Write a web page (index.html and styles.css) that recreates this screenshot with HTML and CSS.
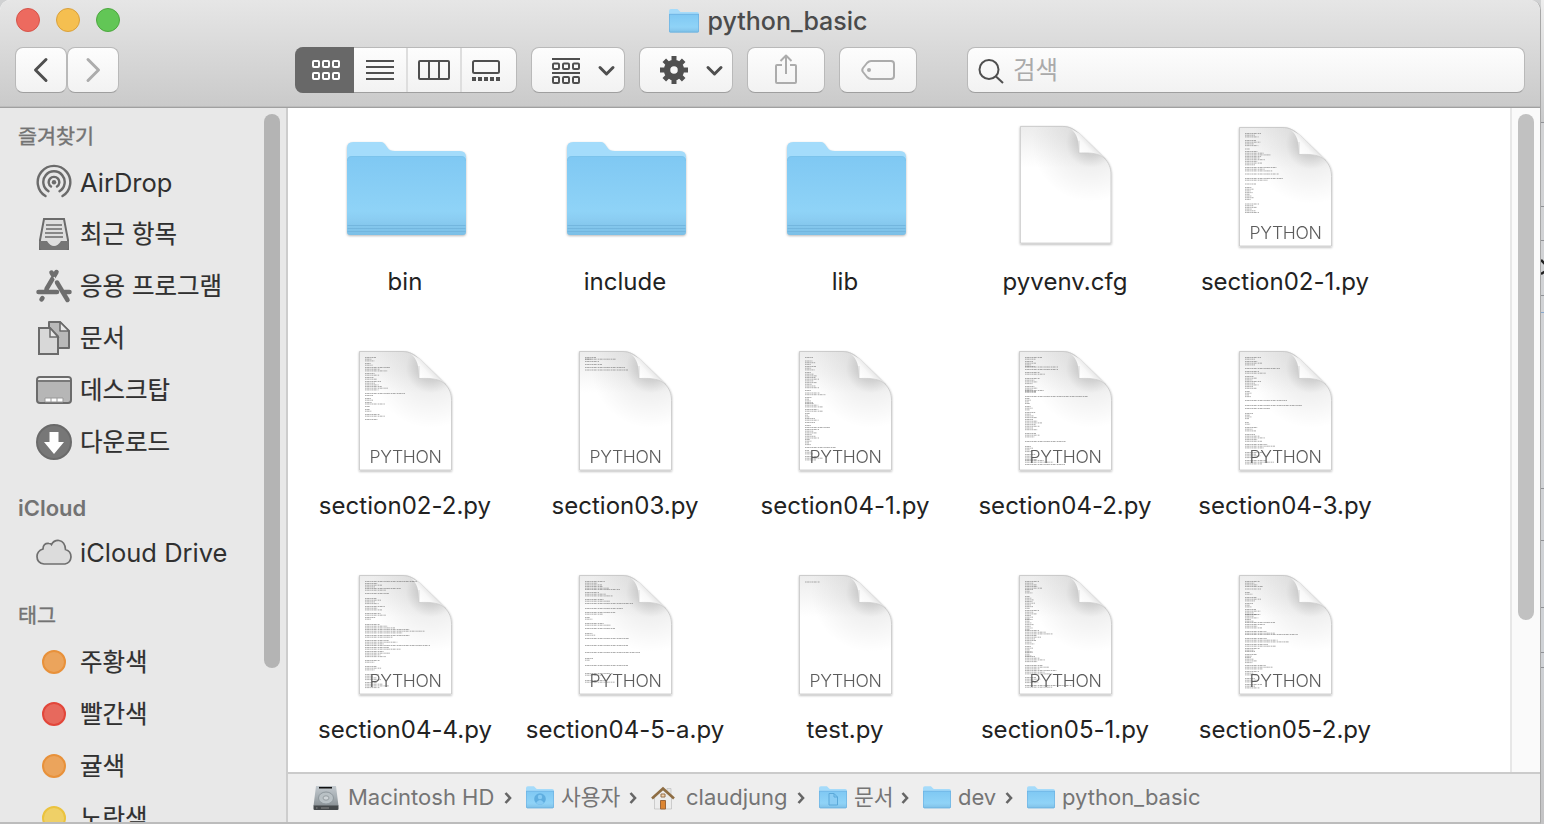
FILE: index.html
```html
<!DOCTYPE html>
<html lang="ko">
<head>
<meta charset="utf-8">
<title>python_basic</title>
<link rel="stylesheet" href="styles.css">
</head>
<body>
<svg class="defs" width="0" height="0" aria-hidden="true">
  <defs>
    <linearGradient id="folderFront" x1="0" y1="0" x2="0" y2="1">
      <stop offset="0" stop-color="#7fc8f3"/><stop offset=".7" stop-color="#8fd3f7"/><stop offset=".8" stop-color="#8bcdf2"/><stop offset="1" stop-color="#7bbfe6"/>
    </linearGradient>
    <linearGradient id="paperTop" x1="0" y1="0" x2="0" y2="1">
      <stop offset="0" stop-color="#ececec"/><stop offset=".35" stop-color="#fff"/>
    </linearGradient>
    <radialGradient id="foldShade" gradientUnits="userSpaceOnUse" cx="90" cy="22" r="60">
      <stop offset="0" stop-color="#000" stop-opacity=".2"/><stop offset=".22" stop-color="#000" stop-opacity=".16"/><stop offset=".42" stop-color="#000" stop-opacity=".06"/><stop offset="1" stop-color="#000" stop-opacity="0"/>
    </radialGradient>
    <linearGradient id="curl" gradientUnits="userSpaceOnUse" x1="79" y1="32" x2="90" y2="22">
      <stop offset="0" stop-color="#fff"/><stop offset=".6" stop-color="#f8f8f8"/><stop offset="1" stop-color="#e4e4e4"/>
    </linearGradient>
    <linearGradient id="disk" x1="0" y1="0" x2="0" y2="1">
      <stop offset="0" stop-color="#c3cacf"/><stop offset=".5" stop-color="#a9b1b6"/><stop offset="1" stop-color="#8a9195"/>
    </linearGradient>
    <symbol id="folder" viewBox="0 0 128 128">
      <path class="folder-back" d="M6 26q0-6 6-6h27c4 0 5 2 7 5s4 4 8 4h65q6 0 6 6v74H6z"/>
      <path fill="url(#folderFront)" d="M6 39q0-5 5-5h109q5 0 5 5v71q0 3-3 3H9q-3 0-3-3z"/>
      <path class="folder-edge" d="M6.500 103.500h118M6.500 106.500h118M6.500 109.500h118"/>
      <path class="folder-rim" d="M6.500 39q0-4.500 4.500-4.500h109q4.500 0 4.500 4.500"/>
    </symbol>
    <symbol id="folder-s" viewBox="0 0 30 26">
      <path fill="#a5dbfa" d="M0 3Q0 1 2 1h6.500l3 3H28q2 0 2 2v17H0z"/>
      <path fill="url(#folderFront)" d="M0 6h30v17q0 1.500-1.500 1.500h-27Q0 24.500 0 23z"/>
      <path fill="none" stroke="#6aaede" stroke-width=".7" d="M.4 6v17q0 1.100 1.100 1.100h27q1.100 0 1.100-1.100V6M.4 6.300h29.200"/>
    </symbol>
    <symbol id="page" viewBox="0 0 128 128">
      <path fill="url(#paperTop)" d="M18 5h43c8 0 12 3 18 8l25 24c5 5 7 10 7 17v70.500H18z"/>
      <path fill="url(#foldShade)" d="M18 5h43c8 0 12 3 18 8l25 24c5 5 7 10 7 17v70.500H18z"/>
      <path class="page-edge" d="M18.500 124V5.500H61c8 0 12 3 17.500 8l25 24c5 5 7 10 7 17V124z"/>
      <path fill="url(#curl)" d="M70 8c6 5 8 11 8 24.500 14-.5 20 .5 27 6L79 13z"/>
      <path fill="none" stroke="#c9c9c9" stroke-width=".7" d="M78 20v12.500c14-.5 20 .5 27 6"/>
    </symbol>
    <symbol id="chev" viewBox="0 0 8 12"><path class="chev-line" d="M1.500 1l4.500 5-4.500 5"/></symbol>
  </defs>
</svg>
<div class="screen">
<div class="window">
  <header class="head">
    <div class="titlebar">
      <div class="lights"><i class="light close"></i><i class="light min"></i><i class="light zoom"></i></div>
      <div class="title"><svg class="title-icon"><use href="#folder-s"/></svg><span>python_basic</span></div>
    </div>
    <div class="toolbar">
      <div class="nav">
        <button class="btn nav-btn"><svg width="50" height="44"><path class="s3 dark" d="M30 11.500L19.500 22 30 32.500"/></svg></button>
        <button class="btn nav-btn"><svg width="50" height="44"><path class="s3 pale" d="M20 11.500L30.500 22 20 32.500"/></svg></button>
      </div>
      <div class="btn views">
        <div class="view on"><svg width="58" height="46"><g class="sq white"><rect x="18" y="14" width="6" height="6" rx="1"/><rect x="28" y="14" width="6" height="6" rx="1"/><rect x="38" y="14" width="6" height="6" rx="1"/><rect x="18" y="26" width="6" height="6" rx="1"/><rect x="28" y="26" width="6" height="6" rx="1"/><rect x="38" y="26" width="6" height="6" rx="1"/></g></svg></div>
        <div class="view"><svg width="52" height="44"><path class="s2 dark" d="M12 13h28M12 19h28M12 25h28M12 31h28"/></svg></div>
        <div class="view"><svg width="52" height="44"><path class="s2 dark" d="M12 13h28q1 0 1 1v16q0 1-1 1H12q-1 0-1-1V14q0-1 1-1zM21 13v18M31 13v18"/></svg></div>
        <div class="view"><svg width="52" height="44"><rect class="s2 dark" x="11" y="13" width="26" height="12" rx="1.500"/><path class="dots" d="M10 31h28"/></svg></div>
      </div>
      <button class="btn wide"><svg width="92" height="44"><path class="s2 dark" d="M20 11h28M20 25h28"/><g class="sq gray"><rect x="21" y="15.500" width="6" height="5.500" rx="1"/><rect x="31" y="15.500" width="6" height="5.500" rx="1"/><rect x="41" y="15.500" width="6" height="5.500" rx="1"/><rect x="21" y="29" width="6" height="6" rx="1"/><rect x="31" y="29" width="6" height="6" rx="1"/><rect x="41" y="29" width="6" height="6" rx="1"/></g><path class="s3 dark" d="M68 19.500l6.500 6.500 6.500-6.500"/></svg></button>
      <button class="btn wide"><svg width="92" height="44"><circle class="gear-body" cx="34" cy="22" r="7"/><path class="teeth" d="M34 14V8M34 30v6M26 22h-6M42 22h6M28.500 16.500l-4.200-4.200M39.500 16.500l4.200-4.200M28.500 27.500l-4.200 4.200M39.500 27.500l4.200 4.200"/><path class="s3 dark" d="M68 19.500l6.500 6.500 6.500-6.500"/></svg></button>
      <button class="btn small"><svg width="76" height="44"><path class="s2 pale" d="M34 17h-5q-1 0-1 1v16q0 1 1 1h18q1 0 1-1V18q0-1-1-1h-5M38 26V8M32.500 13L38 7.500l5.500 5.500"/></svg></button>
      <button class="btn small"><svg width="76" height="44"><path class="s2 pale" d="M31 13h20q3 0 3 3v12q0 3-3 3H31q-2 0-4-2l-4-5q-1.500-2 0-4l4-5q2-2 4-2z"/><circle cx="29" cy="22" r="2" fill="#acacac"/></svg></button>
      <div class="btn search"><svg width="44" height="44"><circle class="s2 dark" cx="21" cy="21.500" r="9.500"/><path class="s2 dark" d="M28 28.500l7 6.500"/></svg><span>검색</span></div>
    </div>
  </header>
  <div class="body">
    <aside class="sidebar">
      <nav class="side-list">
        <h2 class="side-h first">즐겨찾기</h2>
        <div class="item en"><svg width="36" height="36"><g class="s25 gray-l"><path d="M9.500 32.100a16.300 16.300 0 1 1 17 0M12.500 27.200a10.700 10.700 0 1 1 11 0M15 22.500a5.300 5.300 0 1 1 6 0"/></g><circle cx="18" cy="18.200" r="2.200" fill="#6b6b6b"/></svg><span>AirDrop</span></div>
        <div class="item"><svg width="36" height="36"><path fill="#dedede" stroke="#6b6b6b" stroke-width="2" d="M8 3h20l4 21v9H4v-9z"/><path fill="#757575" d="M3 25h8q3 5 7 5t7-5h8l-1 7q0 2-2 2H6q-2 0-2-2z"/><path class="s15 gray-l" d="M10 9h16M10 13h16M9 17h18M9 21h18"/></svg><span>최근 항목</span></div>
        <div class="item"><svg width="36" height="36"><path class="app-bar" d="M15.500 4.500l1.200 2M20.500 4L10.500 21M2.500 24H21M28.500 24h5M6.500 30l-1 1.500"/><path class="app-gap" d="M18 9l4 7"/><path class="app-bar" d="M21 14.500l10.500 17.500"/></svg><span>응용 프로그램</span></div>
        <div class="item"><svg width="36" height="36"><path class="s2 gray-l back-page" d="M13 29V2h11l9 9v17H23"/><path class="s15 gray-l tip" d="M24 2v9h9z"/><path fill="#d8d8d8" stroke="#6b6b6b" stroke-width="2" d="M3 8h11l8 8.500V34H3z"/><path fill="#e8e8e8" stroke="#6b6b6b" stroke-width="1.500" d="M14 8v9h8z"/></svg><span>문서</span></div>
        <div class="item"><svg width="36" height="36"><rect x="1" y="5" width="34" height="26" rx="3" fill="#b6b6b6" stroke="#6b6b6b" stroke-width="2"/><path fill="#f0f0f0" d="M2 8q0-2 2-2h28q2 0 2 2H2z"/><path class="s15 gray-l" d="M2 9h32"/><path fill="#fff" stroke="#999" d="M9 26h18v4H9zM15 26v4M21 26v4"/></svg><span>데스크탑</span></div>
        <div class="item"><svg width="36" height="36"><circle cx="18" cy="18" r="17" fill="#777" stroke="#6a6a6a" stroke-width="2"/><path fill="#fff" d="M13.500 8h9v10H28L18 30 8 18h5.500z"/></svg><span>다운로드</span></div>
        <h2 class="side-h en">iCloud</h2>
        <div class="item en"><svg width="36" height="36"><path fill="#dcdcdc" stroke="#6f6f6f" stroke-width="1.700" d="M8 30Q1 29 1 22.500 1 17 7 15q0-6 6-5.500 2 0 2.500 1Q18 6 23 6.500q6 1 6.500 9Q35 17 35 23q-.5 6-6 7z"/></svg><span>iCloud Drive</span></div>
        <h2 class="side-h">태그</h2>
        <div class="item"><i class="tag orange"></i><span>주황색</span></div>
        <div class="item"><i class="tag red"></i><span>빨간색</span></div>
        <div class="item"><i class="tag orange"></i><span>귤색</span></div>
        <div class="item"><i class="tag yellow"></i><span>노란색</span></div>
      </nav>
      <div class="side-thumb"></div>
    </aside>
    <section class="main">
      <div class="content">
        <div class="grid" id="grid"></div>
        <div class="track"><div class="thumb"></div></div>
      </div>
      <footer class="path">
        <div class="crumb c1"><svg width="26" height="26"><path d="M3 1h20l2.500 20H.5z" fill="url(#disk)"/><path d="M.5 20.500h25V24q0 1-1 1h-23q-1 0-1-1z" fill="#45494b"/><path d="M6 2.700h13" stroke="#111" stroke-width="1.600"/><ellipse cx="13" cy="13" rx="7.500" ry="6" fill="#b9c1c5" stroke="#8f989d"/><ellipse cx="13" cy="13" rx="3" ry="2.200" fill="#cfd5d8" stroke="#959da1"/><path d="M3 23h1.500M8 23h8" stroke="#888"/></svg><span>Macintosh HD</span></div>
        <svg class="sep"><use href="#chev"/></svg>
        <div class="crumb c2"><svg width="28" height="25" viewBox="0 0 28 25"><use href="#folder-s" width="28" height="25"/><circle cx="14" cy="14" r="5.800" fill="#5faee0"/><circle cx="14" cy="12" r="2.200" fill="#86cbf4"/><path d="M10 18q4-6 8 0-4 3.500-8 0z" fill="#86cbf4"/></svg><span class="ko">사용자</span></div>
        <svg class="sep"><use href="#chev"/></svg>
        <div class="crumb c3"><svg width="24" height="24"><path d="M16 2.500h4v7h-4z" fill="#e5e5e5" stroke="#bbb" stroke-width=".6"/><path d="M3.500 11L12 4l8.500 7v12h-17z" fill="#ececec" stroke="#b5b5b5" stroke-width=".6"/><path d="M1 12.500L12 2.500l11 10" fill="none" stroke="#8e6d43" stroke-width="2.600"/><path d="M9.500 14.500h5v8.500h-5z" fill="#dd8531" stroke="#9c663a"/><path d="M10 8h4v3h-4z" fill="#f4d3ad" stroke="#94714c"/></svg><span>claudjung</span></div>
        <svg class="sep"><use href="#chev"/></svg>
        <div class="crumb c4"><svg width="28" height="25" viewBox="0 0 28 25"><use href="#folder-s" width="28" height="25"/><path d="M10 8.500h5l3.500 3.500v8H10zM15 8.500V12h3.500" fill="#8bcdf4" stroke="#5aa8d9"/></svg><span class="ko">문서</span></div>
        <svg class="sep"><use href="#chev"/></svg>
        <div class="crumb c5"><svg width="28" height="25" viewBox="0 0 28 25"><use href="#folder-s" width="28" height="25"/></svg><span>dev</span></div>
        <svg class="sep"><use href="#chev"/></svg>
        <div class="crumb c6"><svg width="28" height="25" viewBox="0 0 28 25"><use href="#folder-s" width="28" height="25"/></svg><span>python_basic</span></div>
      </footer>
    </section>
  </div>
</div>
<svg class="behind" width="3" height="824"><path d="M0 122.500h4M0 206.500h4M0 240.500h4M0 295.500h4M0 488.500h4M0 540.500h4M0 607.500h4M0 652.500h4M0 667.500h4" stroke="#909296"/><path d="M0 312.500h4" stroke="#89a8cc"/><path d="M0 260l4 4M4 271.500l-4 2.500" stroke="#222" stroke-width="2.500"/></svg>
</div>
<script src="app.js"></script>
</body>
</html>
```

FILE: styles.css
```css
* { box-sizing: border-box; }
body { margin: 0; font-family: Inter, "Noto Sans CJK KR", sans-serif; overflow: hidden; }
.defs { position: absolute; }
svg { display: block; flex: none; }
.screen { display: flex; width: 1544px; height: 824px; background: #d0d1d2; overflow: hidden; }
.window { width: 1541px; height: 824px; flex: none; display: flex; flex-direction: column; border-right: 1px solid #a7a7a7; border-bottom: 2px solid #bcbcbc; border-radius: 10px 10px 0 0; overflow: hidden; background: #fff; }
.behind { background: linear-gradient(#eee, #c9cacb 122px, #d2d3d5 123px, #cfd2d6 650px, #c4c4c5); }

.head { flex: none; height: 108px; background: linear-gradient(#e6e6e6, #cacaca); border-bottom: 1px solid #a0a0a0; box-shadow: inset 0 -1px #bcbcbc; }
.titlebar { height: 47px; display: grid; grid-template-columns: 295px 1fr 299px; }
.lights { display: flex; gap: 16px; padding: 8px 0 0 16px; }
.light { width: 24px; height: 24px; border-radius: 50%; border: 1px solid; }
.close { background: #ed6a5f; border-color: #d5544a; }
.min { background: #f5bf50; border-color: #d9a03c; }
.zoom { background: #62c656; border-color: #4da73f; }
.title { display: flex; justify-content: center; gap: 9px; height: 42px; align-items: center; font-size: 25px; font-weight: 500; color: #4b4b4b; }
.title-icon { width: 30px; height: 26px; margin-top: -1px; }
.toolbar { display: flex; padding-left: 15px; }
.btn { height: 46px; border: 1px solid #b9b9b9; border-bottom-color: #9f9f9f; border-radius: 8px; padding: 0; margin: 0; background: linear-gradient(#fdfdfd, #f2f2f2); }
.nav { display: flex; width: 280px; }
.nav-btn { width: 52px; }
.views { display: flex; width: 222px; }
.view { border-left: 2px solid #dedede; }
.view:nth-child(2) { border-left: 0; }
.view.on { background: #686868; border: 0; width: 59px; height: 46px; margin: -1px 0 -1px -1px; border-radius: 8px 0 0 8px; flex: none; }
.wide { width: 94px; margin-left: 14px; }
.small { width: 78px; margin-left: 14px; }
.search { width: 558px; margin-left: 50px; display: flex; color: #aaa; font-size: 24.500px; line-height: 44px; }
.search span { padding-left: 1px; }
.s3, .s2, .s25, .s15 { fill: none; stroke-width: 2; stroke-linejoin: round; }
.s3 { stroke-width: 3; stroke-linecap: round; }
.s25 { stroke-width: 2.400; stroke-linecap: round; }
.s15 { stroke-width: 1.600; }
.dark { stroke: #4f4f4f; }
.pale { stroke: #acacac; }
.gray-l { stroke: #6b6b6b; }
.sq { fill: none; stroke-width: 2; }
.white { stroke: #fff; }
.gray { stroke: #4f4f4f; }
.dots { stroke: #4f4f4f; stroke-width: 4; stroke-dasharray: 4 2; }
.gear-body { fill: none; stroke: #505050; stroke-width: 6.500; }
.teeth { fill: none; stroke: #505050; stroke-width: 5; }

.body { flex: 1; display: flex; min-height: 0; }
.sidebar { width: 288px; flex: none; background: #e8e8e8; border-right: 2px solid #cdcdcd; display: flex; overflow: hidden; }
.side-list { width: 264px; flex: none; }
.side-thumb { width: 16px; height: 554px; margin-top: 6px; border-radius: 8px; background: #b4b4b4; }
.side-h { margin: 0; height: 58px; padding: 19px 0 0 18px; font-size: 20.700px; line-height: 38px; font-weight: 400; color: #737373; -webkit-text-stroke: .4px #737373; }
.side-h.first { height: 48px; padding-top: 10px; }
.side-h.en { padding-top: 20px; font-size: 22px; font-weight: 600; letter-spacing: 0; line-height: 40px; -webkit-text-stroke: 0; }
.item { height: 52px; padding-left: 36px; display: flex; align-items: center; gap: 8px; font-size: 24.500px; color: #303030; white-space: nowrap; -webkit-text-stroke: .2px #303030; }
.item span { line-height: 48px; padding-bottom: 1px; }
.item.en { font-size: 25.500px; -webkit-text-stroke: 0; }
.item.en span { padding: 2px 0 0; }
.tag { width: 24px; height: 24px; margin: 0 6px; border-radius: 50%; border: 2px solid; flex: none; }
.orange { background: #eba45c; border-color: #e8913a; }
.red { background: #e7695d; border-color: #e2463a; }
.yellow { background: #efd067; border-color: #ebc33e; }
.back-page { fill: #b9b9b9; }
.tip { fill: #e8e8e8; }

.main { flex: 1; display: flex; flex-direction: column; min-width: 0; }
.content { flex: 1; display: flex; min-height: 0; }
.grid { flex: 1; padding: 14px 0 0 7px; display: grid; grid-template-columns: repeat(5, 220px); grid-auto-rows: 224px; overflow: hidden; }
.file { display: flex; flex-direction: column; align-items: center; }
.file-icon { width: 128px; height: 128px; filter: drop-shadow(0 1px 1px rgba(0,0,0,.28)); }
.file-name { margin-top: 16px; font-size: 24px; line-height: 32px; color: #222; letter-spacing: .03px; white-space: nowrap; }
.folder-back { fill: #a4dcfb; }
.folder-edge { stroke: #73b6de; stroke-width: 1; }
.folder-rim { fill: none; stroke: #78bfe8; stroke-width: .6; }
.page-edge { fill: none; stroke: #c4c4c4; stroke-width: .8; }
.code { fill: none; stroke: #666; stroke-width: .8; stroke-dasharray: 1.600 .5 2.500 .4 .8 .6; opacity: .65; }
.kind { font-size: 17.600px; font-weight: 300; fill: #5c5c5c; text-anchor: middle; letter-spacing: -.35px; }
.track { width: 30px; flex: none; border-left: 2px solid #e7e7e7; background: #fafafa; padding: 6px 0 0 6px; }
.thumb { width: 16px; height: 506px; border-radius: 8px; background: #c1c1c1; }
.path { height: 50px; flex: none; display: flex; align-items: center; background: #eee; border-top: 2px solid #cbcbcb; padding-left: 25px; color: #757575; font-size: 22px; }
.path > * { margin-top: -1px; }
.crumb { display: flex; align-items: center; gap: 9px; white-space: nowrap; flex: none; }
.crumb span { margin-top: -2px; }
.crumb .ko { font-size: 21.500px; line-height: 40px; margin-top: -2px; }
.c1 { width: 191px; }
.c2 { width: 103px; gap: 7px; }
.c3 { width: 146px; gap: 11px; }
.c4 { width: 82px; gap: 7px; }
.c5 { width: 82px; gap: 7px; }
.c6 { gap: 7px; }
.sep { width: 8px; height: 12px; margin-right: 14px; }
.chev-line { fill: none; stroke: #666; stroke-width: 2.600; }
.app-bar { fill: none; stroke: #6e6e6e; stroke-width: 4.500; stroke-linecap: round; }
.app-gap { fill: none; stroke: #e8e8e8; stroke-width: 1.500; }
```

FILE: app.js
```js
// Each preview block is [top, line count, widest line].
const files = [
  { name: 'bin', kind: 'folder' },
  { name: 'include', kind: 'folder' },
  { name: 'lib', kind: 'folder' },
  { name: 'pyvenv.cfg', kind: 'plain' },
  { name: 'section02-1.py', code: [[11,3,16],[18,4,18],[26.5,1,5],[29,4,26],[35.5,5,20],[45,3,32],[51.5,1,34],[56,2,45],[61.5,1,11],[65,8,9],[81.5,6,14]] },
  { name: 'section02-2.py', code: [[11,3,11],[17,2,9],[21,3,30],[27,2,19],[31,2,12],[35,3,16],[40,3,27],[47,1,40],[49,1,8],[52,2,8],[56,1,7],[57.5,1,20],[60,1,5],[63,2,9],[68,2,20],[73,1,13]] },
  { name: 'section03.py', code: [[11,2,11],[12.7,1,31],[15,1,14],[18,1,17],[21,1,40],[23.5,1,43]] },
  { name: 'section04-1.py', code: [[11,1,8],[14.5,3,12],[20,3,13],[26,3,12],[31,7,14],[44,1,6],[46.5,2,24],[51,4,8],[57,3,18],[63,2,18],[67,3,5],[72,2,16],[76,1,10],[79,1,6],[81,1,25],[83,6,14],[93,4,8],[101,1,31],[104,3,8],[110,3,18]] },
  { name: 'section04-2.py', code: [[11,2,17],[15,4,13],[20.5,1,33],[23,1,33],[26,2,20],[32,4,15],[40,4,15],[44,2,22],[50,1,63],[52,3,6],[57,1,5],[60,3,9],[66,4,12],[73,7,17],[87,3,15],[95,1,41],[100,4,10],[108,4,12],[114,2,38],[118,1,40]] },
  { name: 'section04-3.py', code: [[11,2,16],[15,3,20],[22,1,35],[25,2,28],[30,3,12],[35,5,16],[45,4,8],[54,1,42],[59,1,57],[62,1,25],[67,4,8],[76,2,6],[81,3,15],[88,5,20],[98,3,30],[106,4,18],[114,3,34]] },
  { name: 'section04-4.py', code: [[11,1,52],[13,3,20],[18,2,42],[23,1,24],[28,4,16],[36,3,20],[43,2,25],[47,2,12],[54,3,30],[59,3,60],[65,2,45],[70,3,38],[75,1,65],[77,2,48],[81,4,25],[90,2,15],[96,3,19],[104,4,16],[112,4,24]] },
  { name: 'section04-5-a.py', code: [[11,3,20],[16,2,28],[19,1,35],[22,3,28],[29,2,25],[33,1,48],[38,1,38],[42,2,36],[47,2,10],[53,2,26],[58,1,30],[63,2,12],[68,1,44],[75,1,43],[82,1,55],[88,2,8],[95,1,43],[103,2,33],[110,2,40]] },
  { name: 'test.py', code: [[11.5,1,15]] },
  { name: 'section05-1.py', code: [[11,3,14],[16,2,20],[19,3,10],[26,3,9],[31,5,10],[40,3,14],[45,3,10],[49,7,9],[60,3,28],[65,3,16],[70,3,11],[76,4,10],[82,3,9],[86,4,20],[95,3,24],[100,3,32],[107,4,18],[115,2,55]] },
  { name: 'section05-2.py', code: [[11,3,15],[16,1,18],[18.5,1,16],[22,2,10],[27,3,16],[33,3,8],[39,4,18],[44,3,18],[49,2,12],[52,1,30],[54,3,20],[61,2,35],[64,1,53],[68,3,44],[74,2,31],[78,2,15],[81,1,10],[84,2,14],[87,4,12],[95,3,28],[101,3,14],[108,3,16],[114,3,20]] }
];

function previewPath(blocks) {
  let d = '';
  blocks.forEach(([top, count, width], b) => {
    for (let i = 0; i < count; i++) {
      const share = [1, 0.62, 0.85, 0.5, 0.74][(i + b) % 5];
      const w = count === 1 ? width : width * share;
      d += `M24 ${top + 0.5 + i * 1.7}h${w.toFixed(1)}`;
    }
  });
  return d;
}

function icon(file) {
  if (file.kind === 'folder') return '<use href="#folder"/>';
  if (file.kind === 'plain') return '<use href="#page" x="1.2" y="-1" width="126" height="126"/>';
  return `<use href="#page"/><path class="code" d="${previewPath(file.code)}"/><text class="kind" x="64.5" y="117">PYTHON</text>`;
}

document.getElementById('grid').innerHTML = files.map(file =>
  `<div class="file"><svg class="file-icon" viewBox="0 0 128 128">${icon(file)}</svg><div class="file-name">${file.name}</div></div>`
).join('');
```
